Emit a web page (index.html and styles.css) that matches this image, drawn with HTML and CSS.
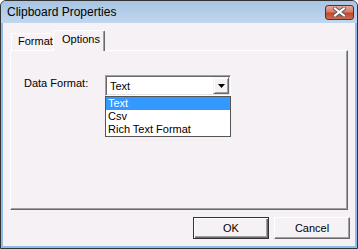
FILE: index.html
```html
<!DOCTYPE html>
<html lang="en">

<head>
    <meta charset="UTF-8">
    <meta name="viewport" content="width=device-width, initial-scale=1.0">
    <title>Clipboard Properties</title>
    <link rel="stylesheet" href="styles.css">
</head>

<body>

    <div class="window">
        <div class="titlebar">
            <span class="title">Clipboard Properties</span>
            <span class="close-btn">
                <svg width="13" height="10" viewBox="0 0 13 10">
                    <path d="M2 1.5 L11 8.5 M11 1.5 L2 8.5" stroke="#5a5a5a" stroke-width="4" stroke-linecap="square" />
                    <path d="M2 1.5 L11 8.5 M11 1.5 L2 8.5" stroke="#fff" stroke-width="2" stroke-linecap="square" />
                </svg>
            </span>
        </div>

        <div class="content">
            <div class="tabs">
                <div class="tab tab-format">Format</div>
                <div class="tab tab-options">Options</div>
            </div>

            <div class="panel">
                <div class="form-row">
                    <label class="field-label" for="dataFormat">Data Format:</label>
                    <div class="combo" id="dataFormat">
                        <span class="combo-value">Text</span>
                        <span class="combo-arrow">
                            <svg width="7" height="4" viewBox="0 0 7 4">
                                <polygon points="0,0 7,0 3.5,4" fill="#000" />
                            </svg>
                        </span>
                        <ul class="combo-list">
                            <li class="selected">Text</li>
                            <li>Csv</li>
                            <li>Rich Text Format</li>
                        </ul>
                    </div>
                </div>
            </div>

            <div class="buttons">
                <button type="button" class="btn btn-default">OK</button>
                <button type="button" class="btn">Cancel</button>
            </div>
        </div>
    </div>

</body>

</html>
```

FILE: styles.css
```css
:root {
    --face-color: #f5f1f5;
    --frame-color: #8cbce8;
    --light-shadow: #a0a0a0;
    --dark-shadow: #696969;
    --highlight-color: #3399ff;
}

body {
    margin: 0;
    font-family: "Liberation Sans", Arial, sans-serif;
    font-size: 11px;
    color: #000;
    background-color: #fff;
}

.window {
    width: 358px;
    height: 249px;
    box-sizing: border-box;
    border: 1px solid #333;
    border-radius: 6px 6px 0 0;
    background-color: var(--frame-color);
    display: flex;
    flex-direction: column;
    overflow: hidden;
}

.titlebar {
    height: 22px;
    flex: none;
    display: flex;
    align-items: center;
    padding: 0 3px 0 6px;
    background: linear-gradient(#a9c5e4, #c0d7ef);
}

.title {
    font-size: 12px;
}

.close-btn {
    margin-left: auto;
    width: 27px;
    height: 13px;
    border: 1px solid #5b2a2a;
    border-radius: 3px;
    background: linear-gradient(#e4aa9e, #d67c68 45%, #c2472f 55%, #d06a52);
    display: flex;
    align-items: center;
    justify-content: center;
}

.content {
    flex: 1;
    margin: 0 2px 2px 2px;
    padding: 7px 7px 0 7px;
    background-color: var(--face-color);
    display: flex;
    flex-direction: column;
}

.tabs {
    height: 20px;
    flex: none;
    display: flex;
    align-items: flex-end;
    padding-left: 1px;
    position: relative;
    z-index: 1;
}

.tab {
    box-sizing: border-box;
    line-height: 13px;
    border-top: 1px solid #fff;
    border-left: 1px solid #fff;
    border-radius: 2px 2px 0 0;
}

.tab-format {
    width: 42px;
    height: 17px;
    padding: 1px 0 0 6px;
}

.tab-options {
    width: 52px;
    height: 21px;
    margin-bottom: -1px;
    padding: 2px 0 0 8px;
    background-color: var(--face-color);
    border-right: 1px solid var(--dark-shadow);
    box-shadow: inset -1px 0 var(--light-shadow);
}

.panel {
    height: 160px;
    flex: none;
    box-sizing: border-box;
    padding: 24px 0 0 13px;
    border-top: 1px solid #fff;
    border-left: 1px solid #fff;
    border-right: 1px solid var(--dark-shadow);
    border-bottom: 1px solid var(--dark-shadow);
    box-shadow: inset -1px -1px var(--light-shadow);
}

.form-row {
    display: flex;
    align-items: flex-start;
}

.field-label {
    width: 81px;
    padding-top: 2px;
}

.combo {
    width: 126px;
    height: 21px;
    box-sizing: border-box;
    padding: 1px;
    border: 1px solid;
    border-color: var(--light-shadow) #fff #fff var(--light-shadow);
    box-shadow: inset 1px 1px var(--dark-shadow), inset -1px -1px #e3e3e3;
    background-color: #fff;
    display: flex;
    align-items: center;
    position: relative;
}

.combo-value {
    flex: 1;
    padding-left: 3px;
}

.combo-arrow {
    width: 16px;
    height: 17px;
    box-sizing: border-box;
    border: 1px solid;
    border-color: var(--face-color) var(--dark-shadow) var(--dark-shadow) var(--face-color);
    box-shadow: inset 1px 1px #fff, inset -1px -1px var(--light-shadow);
    background-color: var(--face-color);
    display: flex;
    align-items: center;
    justify-content: center;
}

.combo-list {
    position: absolute;
    top: 20px;
    left: -1px;
    width: 126px;
    box-sizing: border-box;
    margin: 0;
    padding: 0;
    list-style: none;
    border: 1px solid #555;
    background-color: #fff;
}

.combo-list li {
    height: 13px;
    line-height: 13px;
    padding-left: 2px;
}

.combo-list li.selected {
    background-color: var(--highlight-color);
    color: #fff;
}

.buttons {
    display: flex;
    justify-content: flex-end;
    gap: 5px;
    margin-top: 7px;
    margin-right: -2px;
}

.btn {
    width: 76px;
    height: 22px;
    padding: 0;
    font-family: inherit;
    font-size: 11px;
    color: #000;
    background-color: var(--face-color);
    border: 1px solid;
    border-color: #fff var(--dark-shadow) var(--dark-shadow) #fff;
    box-shadow: inset -1px -1px var(--light-shadow);
}

.btn-default {
    border-color: #333;
    box-shadow: inset 1px 1px #fff, inset -1px -1px var(--dark-shadow), inset -2px -2px var(--light-shadow);
}
```
